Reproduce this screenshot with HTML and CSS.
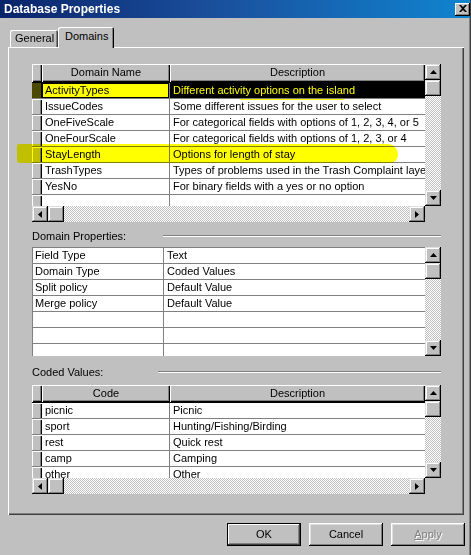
FILE: index.html
```html
<!DOCTYPE html>
<html>
<head>
<meta charset="utf-8">
<link rel="stylesheet" href="styles.css">
</head>
<body>
<div class="window">
  <div class="titlebar">
    <span class="title">Database Properties</span>
    <span class="close"><svg width="8" height="7" viewBox="0 0 8 7"><path d="M0 0h2l2 2 2-2h2L5 3.5 8 7H6L4 5 2 7H0l3-3.5z" fill="#000"/></svg></span>
  </div>
  <div class="tabs">
    <div class="tab">General</div>
    <div class="tab active">Domains</div>
  </div>
  <div class="panel">
    <div class="grid g1">
      <div class="content">
        <div class="hrow">
          <div class="hsel"></div>
          <div class="hcell c1">Domain Name</div>
          <div class="hcell c2">Description</div>
        </div>
        <div class="row">
          <div class="sel dark"></div>
          <div class="c1 picked">ActivityTypes</div>
          <div class="c2 inverse">Different activity options on the island</div>
        </div>
        <div class="row"><div class="sel"></div><div class="c1">IssueCodes</div><div class="c2">Some different issues for the user to select</div></div>
        <div class="row"><div class="sel"></div><div class="c1">OneFiveScale</div><div class="c2">For categorical fields with options of 1, 2, 3, 4, or 5</div></div>
        <div class="row"><div class="sel"></div><div class="c1">OneFourScale</div><div class="c2">For categorical fields with options of 1, 2, 3, or 4</div></div>
        <div class="row"><div class="sel"></div><div class="c1">StayLength</div><div class="c2">Options for length of stay</div></div>
        <div class="row"><div class="sel"></div><div class="c1">TrashTypes</div><div class="c2">Types of problems used in the Trash Complaint layer</div></div>
        <div class="row"><div class="sel"></div><div class="c1">YesNo</div><div class="c2">For binary fields with a yes or no option</div></div>
        <div class="row"><div class="sel"></div><div class="c1"></div><div class="c2"></div></div>
      </div>
      <div class="vscroll">
        <div class="sbtn"><svg width="7" height="4" viewBox="0 0 7 4"><path d="M3.5 0L7 4H0z"/></svg></div>
        <div class="thumb"></div>
        <div class="track"></div>
        <div class="sbtn"><svg width="7" height="4" viewBox="0 0 7 4"><path d="M0 0h7L3.5 4z"/></svg></div>
      </div>
      <div class="hscroll">
        <div class="sbtn"><svg width="4" height="7" viewBox="0 0 4 7"><path d="M4 0v7L0 3.5z"/></svg></div>
        <div class="thumb"></div>
        <div class="track"></div>
        <div class="sbtn"><svg width="4" height="7" viewBox="0 0 4 7"><path d="M0 0l4 3.5L0 7z"/></svg></div>
      </div>
      <div class="corner"></div>
    </div>

    <div class="section s1"><span class="label">Domain Properties:</span><span class="rule"></span></div>

    <div class="grid g2">
      <div class="content">
        <div class="row"><div class="c1">Field Type</div><div class="c2">Text</div></div>
        <div class="row"><div class="c1">Domain Type</div><div class="c2">Coded Values</div></div>
        <div class="row"><div class="c1">Split policy</div><div class="c2">Default Value</div></div>
        <div class="row"><div class="c1">Merge policy</div><div class="c2">Default Value</div></div>
        <div class="row"><div class="c1"></div><div class="c2"></div></div>
        <div class="row"><div class="c1"></div><div class="c2"></div></div>
        <div class="row"><div class="c1"></div><div class="c2"></div></div>
      </div>
      <div class="vscroll">
        <div class="sbtn"><svg width="7" height="4" viewBox="0 0 7 4"><path d="M3.5 0L7 4H0z"/></svg></div>
        <div class="thumb"></div>
        <div class="track"></div>
        <div class="sbtn"><svg width="7" height="4" viewBox="0 0 7 4"><path d="M0 0h7L3.5 4z"/></svg></div>
      </div>
    </div>

    <div class="section s2"><span class="label">Coded Values:</span><span class="rule"></span></div>

    <div class="grid g3">
      <div class="content">
        <div class="hrow">
          <div class="hsel"></div>
          <div class="hcell c1">Code</div>
          <div class="hcell c2">Description</div>
        </div>
        <div class="row"><div class="sel"></div><div class="c1">picnic</div><div class="c2">Picnic</div></div>
        <div class="row"><div class="sel"></div><div class="c1">sport</div><div class="c2">Hunting/Fishing/Birding</div></div>
        <div class="row"><div class="sel"></div><div class="c1">rest</div><div class="c2">Quick rest</div></div>
        <div class="row"><div class="sel"></div><div class="c1">camp</div><div class="c2">Camping</div></div>
        <div class="row"><div class="sel"></div><div class="c1">other</div><div class="c2">Other</div></div>
      </div>
      <div class="vscroll">
        <div class="sbtn"><svg width="7" height="4" viewBox="0 0 7 4"><path d="M3.5 0L7 4H0z"/></svg></div>
        <div class="thumb"></div>
        <div class="track"></div>
        <div class="sbtn"><svg width="7" height="4" viewBox="0 0 7 4"><path d="M0 0h7L3.5 4z"/></svg></div>
      </div>
      <div class="hscroll">
        <div class="sbtn"><svg width="4" height="7" viewBox="0 0 4 7"><path d="M4 0v7L0 3.5z"/></svg></div>
        <div class="thumb"></div>
        <div class="track"></div>
        <div class="sbtn"><svg width="4" height="7" viewBox="0 0 4 7"><path d="M0 0l4 3.5L0 7z"/></svg></div>
      </div>
      <div class="corner"></div>
    </div>

    <div class="mark mark-stay"></div>
    <div class="mark mark-line"></div>
  </div>
  <div class="buttons">
    <div class="btn default">OK</div>
    <div class="btn">Cancel</div>
    <div class="btn disabled"><u>A</u>pply</div>
  </div>
</div>
</body>
</html>
```

FILE: styles.css
```css
* { box-sizing: border-box; margin: 0; padding: 0; }
body {
  margin: 0;
  background: #c0c0c0;
  font-family: "Liberation Sans", Arial, sans-serif;
  font-size: 11px;
  color: #000;
}
.window {
  width: 471px;
  height: 555px;
  background: #c0c0c0;
  overflow: hidden;
  box-shadow: inset -1px 0 #404040, inset -2px 0 #808080;
}
.titlebar {
  height: 18px;
  margin-right: 1px;
  background: linear-gradient(90deg, #0a246a 0%, #1a4f9c 45%, #1084d0 100%);
  display: flex;
  align-items: center;
  justify-content: space-between;
  padding-left: 4px;
  color: #fff;
  font-weight: bold;
  font-size: 12px;
}
.close {
  width: 15px;
  height: 13px;
  margin-right: 0;
  background: #c0c0c0;
  box-shadow: inset -1px -1px #000, inset 1px 1px #fff, inset -2px -2px #808080;
  display: flex;
  align-items: center;
  justify-content: center;
  padding-bottom: 1px;
}
.tabs {
  height: 29px;
  display: flex;
  align-items: flex-end;
  padding-left: 10px;
}
.tab {
  height: 17px;
  width: 48px;
  padding-left: 5px;
  line-height: 16px;
  background: #c0c0c0;
  border-radius: 2px 2px 0 0;
  box-shadow: inset 1px 1px #fff, inset -1px 0 #404040, inset -2px 0 #808080;
}
.tab.active {
  height: 21px;
  width: 56px;
  padding-left: 7px;
  line-height: 18px;
  margin-bottom: -1px;
  position: relative;
  z-index: 2;
  box-shadow: inset 1px 1px #fff, inset -1px 0 #000, inset -2px 0 #808080;
}
.panel {
  position: relative;
  margin-left: 8px;
  width: 456px;
  height: 468px;
  padding: 17px 0 0 24px;
  box-shadow: inset 1px 1px #fff, inset -1px -1px #404040, inset -2px -2px #808080;
}
.grid {
  display: grid;
  grid-template-columns: 393px 16px;
  width: 409px;
}
.g1 { grid-template-rows: 142px 16px; }
.g2 { grid-template-rows: 109px; }
.g3 { grid-template-rows: 93px 16px; }
.content {
  background: #fff;
  overflow: hidden;
  white-space: nowrap;
}
.hrow {
  display: flex;
  height: 19px;
  border-bottom: 1px solid #000;
}
.g3 .hrow { height: 18px; }
.hsel, .hcell {
  background: #c0c0c0;
  box-shadow: inset 1px 1px #fff, inset -1px -1px #000, inset -2px -2px #808080;
}
.hsel { width: 10px; }
.hcell { text-align: center; line-height: 17px; }
.row {
  display: flex;
  height: 16px;
  border-bottom: 1px solid #808080;
  line-height: 15px;
}
.sel {
  width: 10px;
  background: #c0c0c0;
  box-shadow: inset 1px 1px #fff, inset -1px 0 #000, inset -2px 0 #808080;
}
.sel.dark { background: #4b4800; box-shadow: inset -1px 0 #000; }
.c1 {
  width: 128px;
  border-right: 1px solid #808080;
  padding-left: 3px;
  overflow: hidden;
}
.c2 {
  flex: 1;
  padding-left: 3px;
  overflow: hidden;
}
.hcell.c1 { border-right: none; padding-left: 0; }
.hcell.c2 { padding-left: 0; }
.c1.picked {
  background: #ffff00;
  box-shadow: inset 0 0 0 1px #000;
}
.c2.inverse {
  background: #000;
  color: #ffff00;
}
.g2 .content {
  border-top: 1px solid #808080;
  border-left: 1px solid #808080;
}
.g2 .c1 { width: 131px; padding-left: 2px; }
.vscroll {
  display: flex;
  flex-direction: column;
}
.hscroll {
  display: flex;
}
.sbtn, .thumb {
  width: 16px;
  height: 16px;
  flex: none;
  background: #c0c0c0;
  box-shadow: inset -1px -1px #000, inset 1px 1px #dfdfdf, inset -2px -2px #808080, inset 2px 2px #fff;
  display: flex;
  align-items: center;
  justify-content: center;
}
.sbtn svg { fill: #000; }
.track {
  flex: 1;
  background-color: #fff;
  background-image: conic-gradient(#fff 25%, #c0c0c0 0 50%, #fff 0 75%, #c0c0c0 0);
  background-size: 2px 2px;
}
.corner { background: #c0c0c0; }
.section {
  display: flex;
  width: 409px;
  align-items: center;
}
.s1 { height: 25px; padding-top: 2px; }
.s2 { height: 29px; padding-top: 3px; }
.label { flex: none; }
.s1 .label { width: 131px; }
.s2 .label { width: 126px; }
.rule {
  flex: 1;
  height: 2px;
  border-top: 1px solid #808080;
  border-bottom: 1px solid #fff;
}
.mark {
  position: absolute;
  background: #ffff00;
  mix-blend-mode: multiply;
}
.mark-stay {
  left: 9px;
  top: 97px;
  width: 381px;
  height: 19px;
  border-radius: 2px 10px 8px 3px;
}
.mark-line {
  left: 232px;
  top: 52px;
  width: 104px;
  height: 1px;
}
.buttons {
  display: flex;
  gap: 8px;
  padding-left: 227px;
  margin-top: 8px;
}
.btn {
  width: 74px;
  height: 23px;
  line-height: 22px;
  text-align: center;
  background: #c0c0c0;
  box-shadow: inset -1px -1px #000, inset 1px 1px #fff, inset -2px -2px #808080, inset 2px 2px #dfdfdf;
}
.btn.default {
  border: 1px solid #000;
  line-height: 20px;
  box-shadow: inset -1px -1px #404040, inset 1px 1px #fff, inset -2px -2px #808080;
}
.btn.disabled {
  color: #808080;
  text-shadow: 1px 1px #fff;
}
```
